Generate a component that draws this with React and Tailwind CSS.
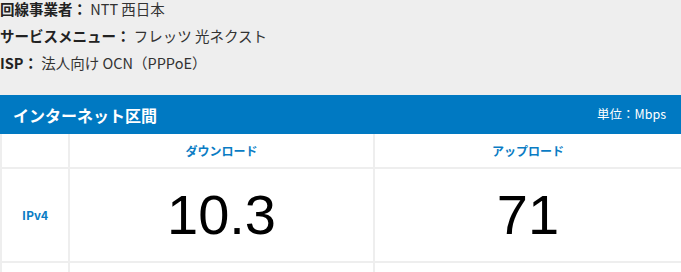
import React from 'react';

const rows = [
  { label: 'IPv4', down: '10.3', up: '71' },
];

export default function App() {
  return (
    <div className="w-[681px] h-[272px] overflow-hidden bg-[#eeeeee] font-['Noto_Sans_CJK_JP',sans-serif]">
      {/* Line info */}
      <div className="-mt-[5px] text-[14.5px] leading-[27px] text-[#333333]">
        <p>
          <span className="font-bold text-[#222222]">回線事業者：</span> NTT 西日本
        </p>
        <p>
          <span className="font-bold text-[#222222]">サービスメニュー：</span> フレッツ 光ネクスト
        </p>
        <p>
          <span className="font-bold text-[#222222]">ISP：</span> 法人向け OCN（PPPoE）
        </p>
      </div>

      {/* Section header */}
      <div className="mt-[19px] h-[39px] bg-[#0079c2] flex items-center justify-between pl-[13px] pr-[15px] text-white">
        <h2 className="text-[16px] font-bold leading-none">インターネット区間</h2>
        <span className="text-[12.5px] leading-none">単位：Mbps</span>
      </div>

      {/* Results table */}
      <div className="grid grid-cols-[66px_303px_1fr] gap-[2px] pl-[2px] bg-[#eeeeee]">
        <div className="h-[33px] bg-white" />
        <div className="h-[33px] bg-white flex items-center justify-center text-[12px] font-bold text-[#0a7cc4]">
          ダウンロード
        </div>
        <div className="h-[33px] bg-white flex items-center justify-center text-[12px] font-bold text-[#0a7cc4]">
          アップロード
        </div>

        {rows.map((row) => (
          <React.Fragment key={row.label}>
            <div className="h-[92px] bg-white flex items-center justify-center text-[12px] font-bold text-[#0a7cc4]">
              {row.label}
            </div>
            <div className="h-[92px] bg-white flex items-center justify-center font-['Liberation_Sans',Arial,sans-serif] text-[56px] leading-none text-black">
              {row.down}
            </div>
            <div className="h-[92px] bg-white flex items-center justify-center font-['Liberation_Sans',Arial,sans-serif] text-[56px] leading-none text-black">
              {row.up}
            </div>
          </React.Fragment>
        ))}

        <div className="h-[40px] bg-white" />
        <div className="h-[40px] bg-white" />
        <div className="h-[40px] bg-white" />
      </div>
    </div>
  );
}
